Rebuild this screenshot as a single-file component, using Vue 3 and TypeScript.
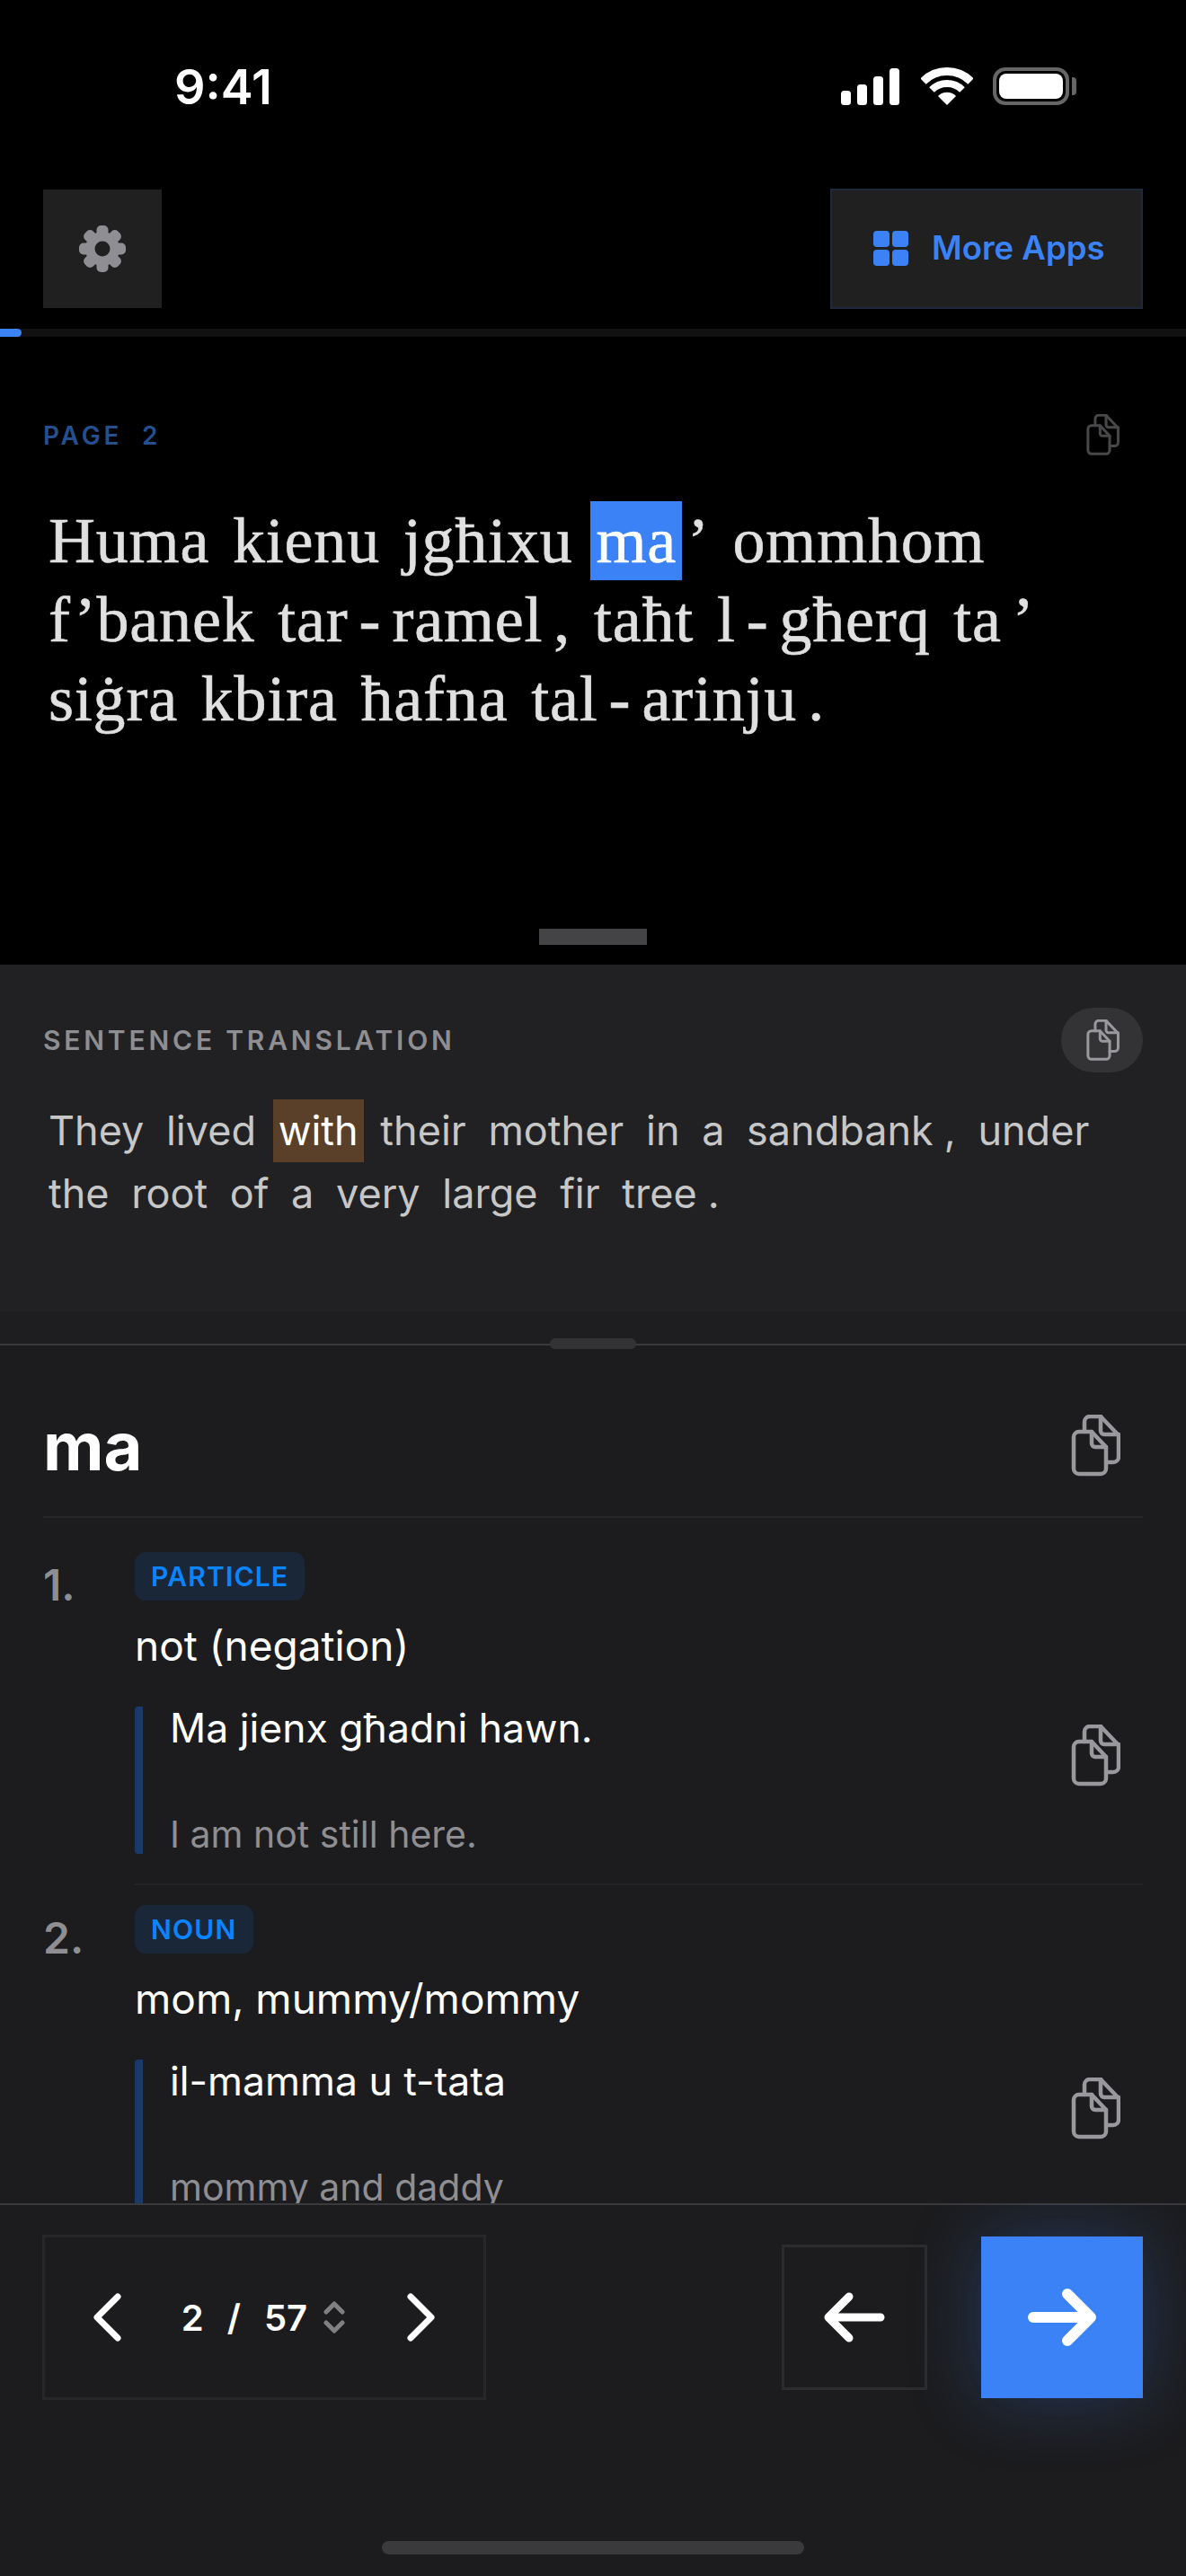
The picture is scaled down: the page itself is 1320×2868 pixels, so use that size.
<template>
  <div class="app">
    <svg class="defs" aria-hidden="true">
      <symbol id="copy" viewBox="0 0 56 70">
        <g fill="none" stroke="currentColor" stroke-width="4.5" stroke-linejoin="round" stroke-linecap="round">
          <path d="M24 19H10a6 6 0 0 0-6 6v35a6 6 0 0 0 6 6h24a6 6 0 0 0 6-6V36Z" />
          <path d="M24 19v13a4 4 0 0 0 4 4h12" />
          <path d="M16 19v-11a6 6 0 0 1 6-6h12l20 21v24a6 6 0 0 1-6 6h-8" />
          <path d="M34 2v16a4 4 0 0 0 4 4h16" />
        </g>
      </symbol>
    </svg>

    <div class="status">
      <span class="time">9:41</span>
      <div class="status-icons">
        <svg width="65" height="41" viewBox="0 0 65 41" fill="#fff">
          <rect x="0" y="25" width="11" height="16" rx="3.5" />
          <rect x="18" y="18" width="11" height="23" rx="3.5" />
          <rect x="36" y="9" width="11" height="32" rx="3.5" />
          <rect x="54" y="0" width="11" height="41" rx="3.5" />
        </svg>
        <svg class="wifi" width="58" height="42" viewBox="0 0 58 42">
          <path d="M2.5 15.5a37.5 37.5 0 0 1 53 0" fill="none" stroke="#fff" stroke-width="9" />
          <path d="M12 25a24 24 0 0 1 34 0" fill="none" stroke="#fff" stroke-width="8" />
          <path d="M29 42L19 32a14 14 0 0 1 20 0Z" fill="#fff" />
        </svg>
        <div class="battery"><i /></div>
        <span class="battery-tip" />
      </div>
    </div>

    <header class="top">
      <button class="settings">
        <svg width="54" height="54" viewBox="0 0 54 54" fill="#8e8e93">
          <rect
            v-for="a in gearAngles"
            :key="a"
            x="20.5"
            y="1"
            width="13"
            height="18"
            rx="5"
            :transform="`rotate(${a} 27 27)`"
          />
          <circle cx="27" cy="27" r="19" />
          <circle cx="27" cy="27" r="8.5" fill="#202020" />
        </svg>
      </button>
      <button class="more">
        <span class="grid"><i /><i /><i /><i /></span>
        More Apps
      </button>
    </header>

    <div class="progress"><div class="progress-fill" /></div>

    <section class="page">
      <div class="label-row">
        <span class="page-label">PAGE&nbsp;&nbsp;2</span>
        <button class="copy-pill dim"><svg class="copy-sm"><use href="#copy" /></svg></button>
      </div>
      <p class="source">
        <template v-for="(t, i) in sourceTokens" :key="i">
          <span class="tok" :class="{ hit: t.text === 'ma' }">{{ t.text }}</span>{{ t.space ? ' ' : '' }}
        </template>
      </p>
      <div class="grip" />
    </section>

    <section class="translation">
      <div class="label-row">
        <span class="tr-label">SENTENCE TRANSLATION</span>
        <button class="copy-pill filled"><svg class="copy-sm"><use href="#copy" /></svg></button>
      </div>
      <p class="target">
        <template v-for="(t, i) in targetTokens" :key="i">
          <span class="tok" :class="{ hit: t.text === 'with' }">{{ t.text }}</span>{{ t.space ? ' ' : '' }}
        </template>
      </p>
    </section>

    <section class="dict">
      <div class="dict-grip" />
      <div class="dict-scroll">
        <div class="head">
          <h1>ma</h1>
          <svg class="copy-lg"><use href="#copy" /></svg>
        </div>
        <div v-for="(e, i) in entries" :key="e.pos" class="entry">
          <span class="num">{{ i + 1 }}.</span>
          <div class="body">
            <span class="pos">{{ e.pos }}</span>
            <div class="def">{{ e.def }}</div>
            <div class="example">
              <div class="ex-text">
                <div class="ex-mt">{{ e.mt }}</div>
                <div class="ex-en">{{ e.en }}</div>
              </div>
              <svg class="copy-lg ex-copy"><use href="#copy" /></svg>
            </div>
          </div>
        </div>
      </div>
    </section>

    <footer class="foot">
      <div class="controls">
        <div class="pager">
          <svg width="34" height="54" viewBox="0 0 34 54" fill="none" stroke="#fff" stroke-width="7" stroke-linecap="round" stroke-linejoin="round">
            <path d="M27 4L4 27l23 23" />
          </svg>
          <div class="count">
            <span>2</span><span>/</span><span>57</span>
            <svg class="updown" width="24" height="36" viewBox="0 0 24 36" fill="none" stroke="#808080" stroke-width="5" stroke-linecap="round" stroke-linejoin="round">
              <path d="M3 12l9-9 9 9M3 24l9 9 9-9" />
            </svg>
          </div>
          <svg width="34" height="54" viewBox="0 0 34 54" fill="none" stroke="#fff" stroke-width="7" stroke-linecap="round" stroke-linejoin="round">
            <path d="M7 4l23 23L7 50" />
          </svg>
        </div>
        <button class="back">
          <svg width="68" height="56" viewBox="0 0 68 56" fill="none" stroke="#fff" stroke-width="9" stroke-linecap="round" stroke-linejoin="round">
            <path d="M5 28h58M28 5L5 28l23 23" />
          </svg>
        </button>
        <button class="next">
          <svg width="76" height="64" viewBox="0 0 76 64" fill="none" stroke="#fff" stroke-width="12" stroke-linecap="round" stroke-linejoin="round">
            <path d="M6 32h64M44 6l26 26-26 26" />
          </svg>
        </button>
      </div>
      <div class="home" />
    </footer>
  </div>
</template>

<script setup lang="ts">
interface Token {
  text: string
  space: boolean
}

// spaces end a word, "|" splits a word into tokens that touch each other
function tokenize(src: string): Token[] {
  const out: Token[] = []
  for (const group of src.split(' ')) {
    const parts = group.split('|')
    parts.forEach((text, i) => out.push({ text, space: i === parts.length - 1 }))
  }
  return out
}

const sourceTokens = tokenize(
  'Huma kienu jgħixu ma|’ ommhom f’banek tar|-|ramel|, taħt l|-|għerq ta|’ siġra kbira ħafna tal|-|arinju|.',
)
const targetTokens = tokenize(
  'They lived with their mother in a sandbank|, under the root of a very large fir tree|.',
)

const gearAngles = [0, 45, 90, 135, 180, 225, 270, 315]

const entries = [
  { pos: 'PARTICLE', def: 'not (negation)', mt: 'Ma jienx għadni hawn.', en: 'I am not still here.' },
  { pos: 'NOUN', def: 'mom, mummy/mommy', mt: 'il-mamma u t-tata', en: 'mommy and daddy' },
]
</script>

<style scoped>
.app {
  width: 1320px;
  height: 2868px;
  overflow: hidden;
  display: flex;
  flex-direction: column;
  background: #000;
  color: #fff;
  font-family: Inter, "Liberation Sans", sans-serif;
}
button {
  border: 0;
  padding: 0;
  background: none;
  color: inherit;
  font: inherit;
}
.defs {
  position: absolute;
  width: 0;
  height: 0;
}

.status {
  height: 210px;
  flex: none;
  display: flex;
  justify-content: space-between;
  align-items: flex-start;
  padding: 0 122px 0 194px;
  box-sizing: border-box;
}
.time {
  margin-top: 66px;
  font-size: 54px;
  font-weight: 600;
  line-height: 62px;
}
.status-icons {
  margin-top: 75px;
  display: flex;
  align-items: center;
}
.status-icons > svg:first-child {
  margin-top: 1px;
}
.wifi {
  margin-left: 24px;
}
.battery {
  margin-left: 22px;
  width: 85px;
  height: 42px;
  box-sizing: border-box;
  border: 4px solid #666;
  border-radius: 14px;
  padding: 3px;
}
.battery i {
  display: block;
  height: 100%;
  border-radius: 8px;
  background: #fff;
}
.battery-tip {
  width: 5px;
  height: 20px;
  margin-left: 3px;
  border-radius: 0 4px 4px 0;
  background: #666;
}

.top {
  flex: none;
  height: 134px;
  display: flex;
  justify-content: space-between;
  align-items: center;
  padding: 0 48px;
}
.settings {
  width: 132px;
  height: 132px;
  background: #202020;
  display: flex;
  align-items: center;
  justify-content: center;
}
.more {
  width: 348px;
  height: 134px;
  box-sizing: border-box;
  border: 2px solid #1e2a3c;
  background: #202020;
  display: flex;
  align-items: center;
  padding-left: 46px;
  padding-bottom: 2px;
  gap: 26px;
  color: #3b82f6;
  font-size: 36.5px;
  font-weight: 600;
}
.grid {
  display: grid;
  grid-template-columns: 18px 18px;
  grid-auto-rows: 18px;
  gap: 3px;
}
.grid i {
  background: #3b82f6;
  border-radius: 4px;
}

.progress {
  flex: none;
  height: 9px;
  margin-top: 22px;
  background: #111;
}
.progress-fill {
  width: 24px;
  height: 100%;
  background: #3b82f6;
  border-radius: 0 5px 5px 0;
}

.label-row {
  display: flex;
  justify-content: space-between;
  align-items: center;
  height: 72px;
}
.copy-pill {
  width: 91px;
  height: 72px;
  border-radius: 36px;
  display: flex;
  align-items: center;
  justify-content: center;
}
.copy-pill.dim {
  color: #48484a;
}
.copy-pill.filled {
  color: #98989d;
  background: #333335;
}
.copy-sm {
  width: 38px;
  height: 47px;
}

.page {
  flex: none;
  height: 699px;
  box-sizing: border-box;
  padding: 73px 48px 0;
  display: flex;
  flex-direction: column;
}
.page-label {
  margin-top: 2px;
  font-size: 28px;
  font-weight: 600;
  letter-spacing: 3.8px;
  color: #24508f;
}
.source {
  margin: 38px 0 0;
  font-family: "Liberation Serif", serif;
  font-size: 72px;
  line-height: 88px;
  letter-spacing: 0.8px;
  word-spacing: -5px;
  color: #e0e0e0;
  -webkit-text-stroke: 0.6px #e0e0e0;
}
.tok {
  display: inline-block;
  padding: 0 6px;
}
.source .hit {
  background: #3b82f6;
  color: #fff;
  -webkit-text-stroke: 0.6px #fff;
}
.grip {
  width: 120px;
  height: 18px;
  margin: auto auto 22px;
  background: #444446;
}

.translation {
  flex: none;
  height: 422px;
  box-sizing: border-box;
  padding: 48px 48px 0;
  background: linear-gradient(#212123 386px, #1e1e20 386px);
}
.tr-label {
  font-size: 30px;
  font-weight: 600;
  letter-spacing: 3.8px;
  color: #8e8e93;
}
.target {
  margin: 30px 0 0;
  font-size: 45px;
  line-height: 70px;
  color: #c7c7c7;
}
.target .hit {
  background: #5a4028;
  color: #fff;
}

.dict {
  flex: none;
  position: relative;
  height: 957px;
  box-sizing: border-box;
  border-top: 2px solid #3a3a3c;
  background: #1c1c1e;
}
.dict-grip {
  position: absolute;
  left: 612px;
  top: -8px;
  width: 96px;
  height: 12px;
  border-radius: 6px;
  background: #333336;
}
.dict-scroll {
  height: 100%;
  overflow: hidden;
  padding: 0 48px;
}
.head {
  display: flex;
  align-items: center;
  justify-content: space-between;
  height: 128px;
  margin-top: 48px;
  padding-bottom: 14px;
  border-bottom: 2px solid #262628;
}
.head h1 {
  margin: 0;
  font-size: 74px;
  font-weight: 700;
  line-height: 1;
}
.copy-lg {
  width: 56px;
  height: 70px;
  margin-right: 25px;
  color: #98989d;
}
.entry {
  display: flex;
  padding-top: 22px;
}
.head + .entry {
  padding-top: 38px;
}
.num {
  flex: none;
  width: 102px;
  margin-top: 8px;
  font-size: 48px;
  font-weight: 600;
  line-height: 58px;
  color: #8e8e93;
}
.body {
  flex: 1;
  padding-bottom: 33px;
  border-bottom: 2px solid #242426;
}
.pos {
  display: inline-block;
  height: 54px;
  padding: 0 18px;
  border-radius: 12px;
  background: #1a2738;
  color: #0a84ff;
  font-size: 30px;
  font-weight: 600;
  letter-spacing: 1.2px;
  line-height: 54px;
  vertical-align: top;
}
.def {
  margin-top: 23px;
  font-size: 46px;
  line-height: 54px;
}
.example {
  display: flex;
  justify-content: space-between;
  align-items: flex-start;
  margin-top: 41px;
  padding-left: 30px;
  border-left: 9px solid #1a3a6a;
  border-radius: 4px;
}
.ex-mt {
  font-size: 44.5px;
  line-height: 48px;
}
.ex-en {
  margin-top: 72px;
  font-size: 41px;
  line-height: 44px;
  color: #8e8e93;
}
.ex-copy {
  margin-top: 20px;
}

.foot {
  flex: 1;
  display: flex;
  flex-direction: column;
  border-top: 2px solid #3a3a3c;
  background: #1c1c1e;
}
.controls {
  display: flex;
  align-items: center;
  margin-top: 33px;
  padding: 0 48px 0 47px;
}
.pager {
  width: 494px;
  height: 184px;
  box-sizing: border-box;
  border: 3px solid #27272a;
  display: flex;
  align-items: center;
  justify-content: space-between;
  padding: 0 54px;
}
.count {
  display: flex;
  align-items: center;
  gap: 26px;
  font-size: 40px;
  font-weight: 600;
  margin-left: -2px;
}
.updown {
  margin-left: -8px;
}
.back {
  margin-left: auto;
  width: 162px;
  height: 162px;
  box-sizing: border-box;
  border: 3px solid #2c2c2e;
  display: flex;
  align-items: center;
  justify-content: center;
}
.next {
  margin-left: 60px;
  width: 180px;
  height: 180px;
  background: #3b82f6;
  box-shadow: 0 0 80px rgba(59, 130, 246, 0.28);
  display: flex;
  align-items: center;
  justify-content: center;
}
.home {
  width: 470px;
  height: 15px;
  margin: auto auto 24px;
  border-radius: 8px;
  background: #3a3a3c;
}
</style>

<style>
body {
  background: #000;
}
</style>
